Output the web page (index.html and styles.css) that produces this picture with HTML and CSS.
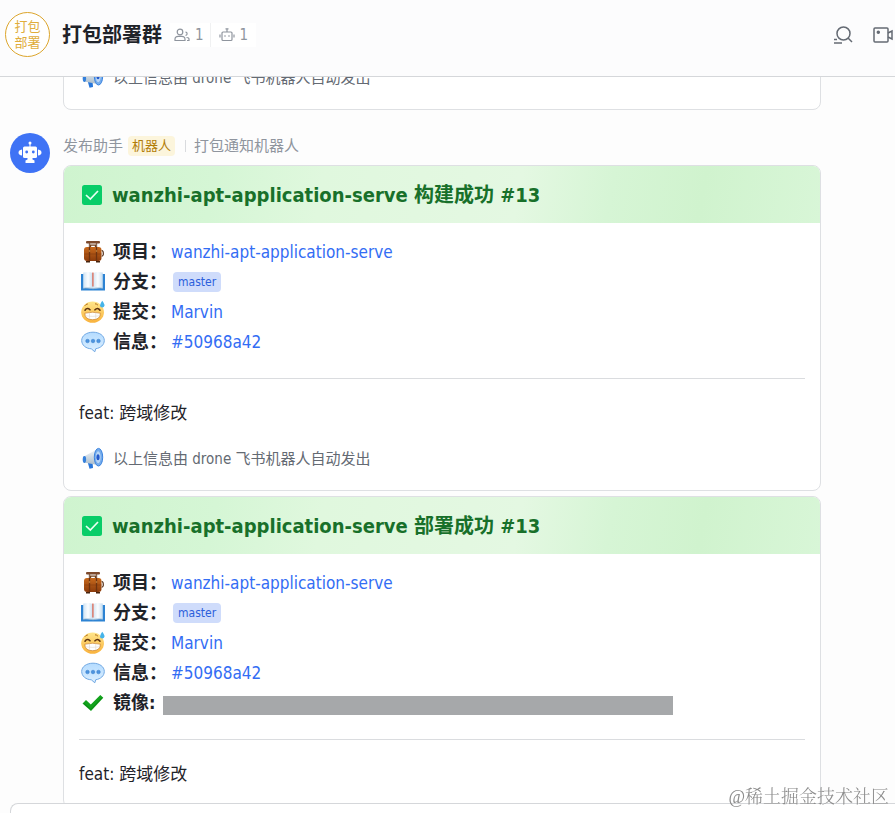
FILE: index.html
```html
<!DOCTYPE html>
<html lang="zh-CN">
<head>
<meta charset="utf-8">
<meta name="viewport" content="width=device-width, initial-scale=1">
<title>打包部署群</title>
<link rel="stylesheet" href="styles.css">
</head>
<body>
<svg class="defs" aria-hidden="true">
  <defs>
    <linearGradient id="brown" x1="0" y1="0" x2="0" y2="1"><stop offset="0" stop-color="#c8691c"/><stop offset="1" stop-color="#8c3c0c"/></linearGradient>
    <linearGradient id="face" x1="0" y1="0" x2="0" y2="1"><stop offset="0" stop-color="#ffe58a"/><stop offset="1" stop-color="#f9b23c"/></linearGradient>
    <linearGradient id="bubble" x1="0" y1="0" x2="0" y2="1"><stop offset="0" stop-color="#b5dcff"/><stop offset="1" stop-color="#dcefff"/></linearGradient>
    <linearGradient id="page" x1="0" y1="0" x2="1" y2="0"><stop offset="0" stop-color="#cfe3f3"/><stop offset=".5" stop-color="#fbfdff"/><stop offset="1" stop-color="#c3dcf0"/></linearGradient>
    <linearGradient id="horn" x1="0" y1="0" x2="0" y2="1"><stop offset="0" stop-color="#f2f6fa"/><stop offset="1" stop-color="#a9bccb"/></linearGradient>
  </defs>
  <symbol id="luggage" viewBox="0 0 24 24">
    <path d="M8.500 7V2.500M15.500 7V2.500" stroke="#8a6a58" stroke-width="1.400"/>
    <rect x="5" y="1" width="14" height="2.400" rx="1" fill="#7d4a2c"/>
    <rect x="3" y="7" width="17.500" height="14" rx="3" fill="url(#brown)"/>
    <path d="M3.500 14h17" stroke="#8a400e" stroke-width=".7"/>
    <path d="M9.500 7V5.200h5V7" fill="none" stroke="#70401e" stroke-width="1.300"/>
    <path d="M8.500 7v14M15.500 7v14" stroke="#6d3310" stroke-width="1.300"/>
    <path d="M7.800 11h1.400M14.800 11h1.400" stroke="#e9b362" stroke-width="1.200"/>
    <path d="M20.700 10.500q1.800 0 1.600 4-.3 1.800-1.600 1.600" fill="none" stroke="#54301a" stroke-width="1.200"/>
    <path d="M5 21h4v1.500H5zM15 21h4v1.500h-4z" fill="#47240f"/>
  </symbol>
  <symbol id="book" viewBox="0 0 24 24">
    <path d="M0 4h4v14l8 .5 8-.5V4h4v16.500H0z" fill="#2d83d3"/>
    <path d="M2.200 2.500C6 1.700 9.500 1.800 12 3.200v15.600c-2.500-1.100-6-1.100-9.800-.5z" fill="url(#page)"/>
    <path d="M21.800 2.500C18 1.700 14.500 1.800 12 3.200v15.600c2.500-1.100 6-1.100 9.800-.5z" fill="url(#page)"/>
    <path d="M2.200 18.300c4-.6 7.300-.4 9.800.5 2.500-.9 5.800-1.100 9.800-.5" fill="none" stroke="#8aafcb" stroke-width=".8"/>
    <path d="M11.900 2.500v14" stroke="#e06a55" stroke-width="1.300"/>
  </symbol>
  <symbol id="sweat" viewBox="0 0 24 24">
    <ellipse cx="11.600" cy="12.200" rx="11.400" ry="10.600" fill="url(#face)"/>
    <path d="M3.800 5.800q1-1.700 3.100-1.900M14 3.800q2 .1 2.900 1.400" fill="none" stroke="#b46c18" stroke-width="1"/>
    <path d="M4 10.200q2.300-3.100 5-.4M14 9.800q2.600-2.800 5 .4" fill="none" stroke="#603410" stroke-width="1.600" stroke-linecap="round"/>
    <path d="M3.800 13.200q7.800-2 15.600 0 0 6.500-7.800 6.500t-7.800-6.500z" fill="#fff" stroke="#c8812c" stroke-width=".7"/>
    <path d="M4.300 15.800q7.300 1.200 14.600 0M8.500 12.700v6.300M14.700 12.700v6.300" fill="none" stroke="#e0d6cc" stroke-width=".6"/>
    <path d="M21.200.8q2.600 3.400 2.300 5-.5 1.800-2.400 1.700-2-.2-2.100-2 0-1.600 2.200-4.700z" fill="#45b4ea"/>
  </symbol>
  <symbol id="speech" viewBox="0 0 24 24">
    <path d="M12 2.200c6.400 0 11.300 3.400 11.300 8.200 0 4.500-3.700 7.600-8.500 8.300l-1 3.100-3.500-3C4.800 18.500.7 15.200.7 10.400.7 5.600 5.600 2.200 12 2.200z" fill="url(#bubble)" stroke="#70a8e3"/>
    <g fill="#4d94df" stroke="#327bc8" stroke-width=".5"><circle cx="6.500" cy="11" r="1.800"/><circle cx="12" cy="11" r="1.800"/><circle cx="17.500" cy="11" r="1.800"/></g>
  </symbol>
  <symbol id="tick" viewBox="0 0 24 24"><path d="M1.500 12.500 5 9l4.800 4.500L19.300 4l3 2.800L10 20z" fill="#12a21c"/><path d="M3 12.500 9.800 18.500 21 6.800" fill="none" stroke="#078012" stroke-width=".8"/></symbol>
  <symbol id="megaphone" viewBox="0 0 24 24">
    <path d="M6.500 14.500h5l.5 6.500-3.500.8z" fill="#2876da"/>
    <path d="M3 9.500 15.500 2.600v15.200L3 15.500z" fill="url(#horn)"/>
    <ellipse cx="3.400" cy="12.500" rx="1.700" ry="3.400" fill="#3480dc"/>
    <ellipse cx="17.500" cy="10.200" rx="4.200" ry="8.800" fill="#75acec" stroke="#3c84df" stroke-width="1"/>
    <ellipse cx="17.200" cy="10.300" rx="2.400" ry="6" fill="#b9d6f6"/>
    <ellipse cx="17" cy="10.300" rx="1.600" ry="3" fill="#2459cb"/>
  </symbol>
  <symbol id="check" viewBox="0 0 20 20"><rect width="20" height="20" rx="2.500" fill="#08cd68"/><path d="m4 10 4.300 4L16 6" fill="none" stroke="#e8fff2" stroke-width="1.700"/></symbol>
</svg>

<header class="topbar">
  <div class="group-avatar">打包<br>部署</div>
  <h1 class="group-name">打包部署群</h1>
  <div class="counts">
    <button class="count" type="button" aria-label="成员">
      <svg width="16" height="16" viewBox="0 0 16 16" fill="none" stroke="currentColor" stroke-width="1.200"><circle cx="6" cy="5" r="2.800"/><path d="M1 13.500v-1.200c0-2 1.400-3 3.200-3h3.600c1.800 0 3.200 1 3.200 3v1.200zM11.500 5.200a1.600 1.600 0 1 1 0 3.200M12.500 10.500c1.600 0 2.500.6 2.500 1.600v1.400h-2"/></svg>1</button>
    <button class="count" type="button" aria-label="机器人">
      <svg width="16" height="16" viewBox="0 0 16 16" fill="none" stroke="currentColor" stroke-width="1.200"><rect x="3" y="5" width="10" height="8.500" rx="1"/><path d="M8 5V1.500M6.500 1.800h3M1 7.500v3M15 7.500v3M6 8.300v1.500M10 8.300v1.500"/></svg>1</button>
  </div>
  <div class="actions">
    <button type="button" aria-label="搜索"><svg width="20" height="20" viewBox="0 0 20 20" fill="none" stroke="currentColor" stroke-width="1.500"><circle cx="10.500" cy="8.500" r="6.500"/><path d="m15 13 4 4M1 14.500h3M1 18h8"/></svg></button>
    <button type="button" aria-label="视频会议"><svg width="20" height="20" viewBox="0 0 20 20" fill="none" stroke="currentColor" stroke-width="1.500"><rect x="1" y="3" width="14" height="14" rx="1"/><path d="m15 8 4-2v8l-4-2"/><circle cx="5.300" cy="7.300" r="1" fill="currentColor"/></svg></button>
  </div>
</header>

<main class="chat">
  <section class="message earlier">
    <div class="cards">
      <article class="card"><div class="card-body"><p class="note"><svg class="emoji"><use href="#megaphone"/></svg>以上信息由 drone 飞书机器人自动发出</p></div></article>
    </div>
  </section>

  <section class="message">
    <svg class="bot" width="40" height="40" viewBox="0 0 40 40"><circle cx="20" cy="20" r="20" fill="#3f73f5"/><g fill="#fff"><circle cx="20" cy="10" r="1.500"/><path d="M19.500 10h1v4h-1z"/><rect x="13" y="13.500" width="14" height="11.500" rx="1.500"/><path d="M12 16.500v6q-3.500-.5-3.500-3t3.500-3zM28 16.500v6q3.500-.5 3.500-3t-3.500-3zM17.500 25h5v1.500l2 1V30h-9v-2.500l2-1z"/></g><circle cx="16.700" cy="19" r="1.400" fill="#3f73f5"/><circle cx="23.300" cy="19" r="1.400" fill="#3f73f5"/></svg>
    <div class="cards">
      <div class="sender"><span>发布助手</span><span class="bot-tag">机器人</span><span class="about">打包通知机器人</span></div>

      <article class="card">
        <h2 class="card-title"><svg width="20" height="20"><use href="#check"/></svg>wanzhi-apt-application-serve 构建成功 #13</h2>
        <div class="card-body">
          <dl class="fields">
            <div><dt><svg class="emoji"><use href="#luggage"/></svg>项目：</dt><dd><a href="#">wanzhi-apt-application-serve</a></dd></div>
            <div><dt><svg class="emoji"><use href="#book"/></svg>分支：</dt><dd><span class="branch">master</span></dd></div>
            <div><dt><svg class="emoji"><use href="#sweat"/></svg>提交：</dt><dd><a href="#">Marvin</a></dd></div>
            <div><dt><svg class="emoji"><use href="#speech"/></svg>信息：</dt><dd><a href="#">#50968a42</a></dd></div>
          </dl>
          <hr>
          <p class="commit">feat: 跨域修改</p>
          <p class="note"><svg class="emoji"><use href="#megaphone"/></svg>以上信息由 drone 飞书机器人自动发出</p>
        </div>
      </article>

      <article class="card">
        <h2 class="card-title"><svg width="20" height="20"><use href="#check"/></svg>wanzhi-apt-application-serve 部署成功 #13</h2>
        <div class="card-body">
          <dl class="fields">
            <div><dt><svg class="emoji"><use href="#luggage"/></svg>项目：</dt><dd><a href="#">wanzhi-apt-application-serve</a></dd></div>
            <div><dt><svg class="emoji"><use href="#book"/></svg>分支：</dt><dd><span class="branch">master</span></dd></div>
            <div><dt><svg class="emoji"><use href="#sweat"/></svg>提交：</dt><dd><a href="#">Marvin</a></dd></div>
            <div><dt><svg class="emoji"><use href="#speech"/></svg>信息：</dt><dd><a href="#">#50968a42</a></dd></div>
            <div><dt><svg class="emoji"><use href="#tick"/></svg>镜像:</dt><dd class="masked"></dd></div>
          </dl>
          <hr>
          <p class="commit">feat: 跨域修改</p>
        </div>
      </article>
    </div>
  </section>
</main>

<footer class="composer"></footer>
<div class="watermark">@稀土掘金技术社区</div>
</body>
</html>
```
FILE: styles.css
```css
* { box-sizing: border-box; }

body {
  margin: 0;
  height: 100vh;
  display: flex;
  flex-direction: column;
  overflow: hidden;
  background: #fdfdfd;
  color: #1f2329;
  font: 17px/30px "DejaVu Sans Condensed", "Noto Sans CJK SC", sans-serif;
}

h1, h2, p, dl, dd { margin: 0; }
a { color: #336df4; text-decoration: none; }
svg { flex: none; }
.defs { position: absolute; width: 0; height: 0; }

button {
  display: flex;
  align-items: center;
  padding: 0;
  border: 0;
  background: none;
  color: inherit;
  font: inherit;
}

.topbar {
  flex: none;
  display: flex;
  align-items: center;
  height: 77px;
  padding: 0 2px 7px 5px;
  border-bottom: 1px solid #d5d7da;
  background: #fcfcfd;
}

.group-avatar {
  width: 45px;
  height: 45px;
  padding-top: 6px;
  border: 1px solid #dca52c;
  border-radius: 50%;
  background: #fff;
  color: #e0ad3c;
  font-size: 13px;
  line-height: 16px;
  text-align: center;
}

.group-name { margin-left: 12px; font-size: 20px; font-weight: 700; }

.counts { display: flex; margin-left: 8px; padding: 0 8px 0 4px; color: #8f959e; background: #fff; }
.count { gap: 5px; font-size: 15px; line-height: 24px; }
.count + .count { margin-left: 6px; padding-left: 8px; border-left: 1px solid #f0f1f2; }

.actions { display: flex; gap: 20px; margin-left: auto; color: #646a73; }

.chat { flex: 1; min-height: 0; overflow: hidden; }

.message { display: flex; padding: 0 74px 0 10px; }
.message + .message { margin-top: 23px; }
.earlier { margin-top: -46px; padding-left: 63px; }
.bot { margin-right: 13px; }
.cards { flex: 1; min-width: 0; }

.sender {
  display: flex;
  align-items: center;
  height: 26px;
  margin-bottom: 6px;
  color: #8f959e;
  font-size: 15px;
}
.bot-tag {
  margin: 0 10px 0 5px;
  padding: 0 4px;
  border-radius: 4px;
  background: #fcf5dc;
  color: #b27d08;
  font-size: 13px;
  line-height: 20px;
}
.about { padding-left: 8px; border-left: 1px solid #d9dbde; line-height: 12px; }

.card {
  border: 1px solid #dee0e3;
  border-radius: 8px;
  background: #fff;
  overflow: hidden;
}
.card + .card { margin-top: 5px; }

.card-title {
  display: flex;
  align-items: center;
  gap: 10px;
  height: 57px;
  padding-left: 18px;
  background: linear-gradient(100deg, #cff4cf 0%, #d5f6d5 20%, #e0f8de 34%, #e4f8e2 60%, #d6f5d5 72%, #d0f3ce 84%, #d8f6d7 100%);
  color: #18702a;
  font-size: 20px;
  font-weight: 700;
}

.card-body { padding: 14px 15px 19px; }
.fields div { display: flex; align-items: center; height: 30px; }
.fields dt { display: flex; align-items: center; font-size: 18px; font-weight: 700; }
.fields dd { margin-left: 4px; }
.emoji { width: 24px; height: 24px; margin: 0 8px 0 2px; }
.branch {
  display: block;
  margin-left: 2px;
  padding: 0 5px;
  border-radius: 4px;
  background: #cfdcfb;
  color: #2c5fdb;
  font-size: 12px;
  line-height: 20px;
}
.fields .masked {
  flex: 0 1 510px;
  align-self: flex-end;
  height: 19px;
  margin: 0 0 3px 8px;
  background: #a6a8aa;
}

hr { height: 1px; margin: 21px 0 20px; border: 0; background: #dadcdf; }
.commit { line-height: 28px; }
.note {
  display: flex;
  align-items: center;
  margin-top: 20px;
  color: #646a73;
  font-size: 15px;
  line-height: 24px;
}

.composer {
  flex: none;
  height: 10px;
  margin-left: 10px;
  border: solid #d5d7da;
  border-width: 1px 0 0 1px;
  border-radius: 8px 0 0;
  background: #fff;
}

.watermark {
  position: fixed;
  right: 6px;
  bottom: 4px;
  color: #8c8c8c;
  font: 300 18px/24px "Liberation Serif", "Noto Serif CJK SC", "Noto Sans CJK SC", serif;
}
```
